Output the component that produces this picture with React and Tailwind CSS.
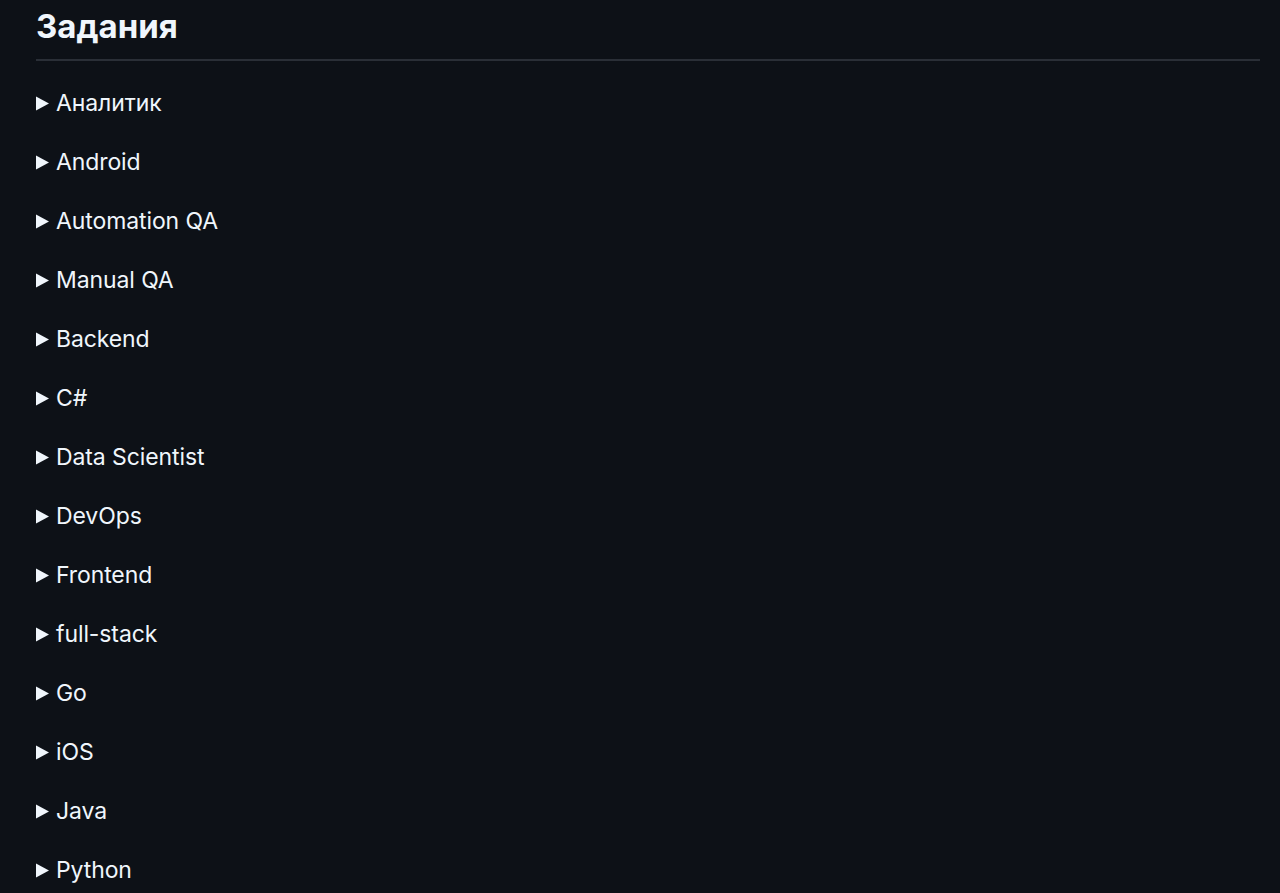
import React from 'react'

const items = [
  'Аналитик',
  'Android',
  'Automation QA',
  'Manual QA',
  'Backend',
  'C#',
  'Data Scientist',
  'DevOps',
  'Frontend',
  'full-stack',
  'Go',
  'iOS',
  'Java',
  'Python',
]

function Item({ name }) {
  return (
    <div className="flex items-center h-[35px] mb-[24px] cursor-pointer">
      <svg width="13" height="15" viewBox="0 0 13 15" className="shrink-0">
        <polygon points="0,0.5 13,7.5 0,14.5" fill="#f0f6fc" />
      </svg>
      <span className="ml-[7px] text-[23px] tracking-[-0.1px] text-[#f0f6fc]">{name}</span>
    </div>
  )
}

export default function App() {
  return (
    <div
      className="min-h-[893px] bg-[#0d1117] overflow-hidden"
      style={{ fontFamily: 'Inter, "Noto Sans", sans-serif' }}
    >
      <div className="pl-[36px] pr-[20px]">
        <h2 className="pt-[4px] text-[33px] font-bold leading-[45px] text-[#f0f6fc] pb-[10px] border-b-2 border-[#2a2f37]">
          Задания
        </h2>
        <div className="mt-[25px]">
          {items.map((it) => (
            <Item key={it} name={it} />
          ))}
        </div>
      </div>
    </div>
  )
}
